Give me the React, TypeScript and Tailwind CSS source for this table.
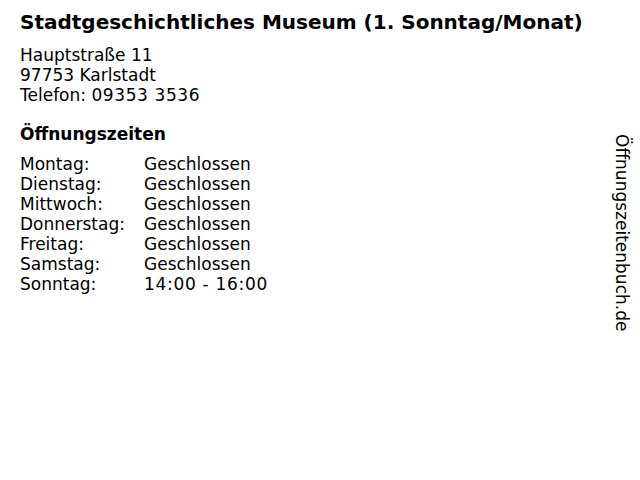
import React from "react";

const hours: [string, string][] = [
  ["Montag:", "Geschlossen"],
  ["Dienstag:", "Geschlossen"],
  ["Mittwoch:", "Geschlossen"],
  ["Donnerstag:", "Geschlossen"],
  ["Freitag:", "Geschlossen"],
  ["Samstag:", "Geschlossen"],
  ["Sonntag:", "14:00 - 16:00"],
];

export default function App() {
  return (
    <div className="relative w-[640px] h-[480px] bg-white text-black font-['DejaVu_Sans',sans-serif] overflow-hidden">
      <div className="pl-5 pt-[10px]">
        <h1 className="text-[20px] leading-[24px] font-bold">
          Stadtgeschichtliches Museum (1. Sonntag/Monat)
        </h1>
        <div className="mt-[11px] text-[17px] leading-[20px]">
          <div>Hauptstraße 11</div>
          <div>97753 Karlstadt</div>
          <div>
            Telefon: <span className="tracking-[0.6px]">09353 3536</span>
          </div>
        </div>
        <h2 className="mt-[19px] text-[17px] leading-[20px] font-bold">Öffnungszeiten</h2>
        <div className="mt-[10px] grid grid-cols-[124px_auto] text-[17px] leading-[20px]">
          {hours.map(([d, t]) => (
            <React.Fragment key={d}>
              <div>{d}</div>
              <div className={t.includes(":") ? "tracking-[0.7px]" : ""}>{t}</div>
            </React.Fragment>
          ))}
        </div>
      </div>
      <div className="absolute right-[8px] top-[134px] text-[17px] leading-[20px] [writing-mode:vertical-rl]">
        Öffnungszeitenbuch.de
      </div>
    </div>
  );
}
